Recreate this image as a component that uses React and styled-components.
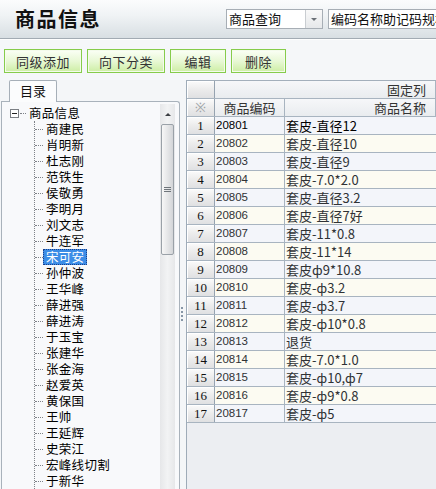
import React from 'react'
import styled, { createGlobalStyle } from 'styled-components'

const GlobalStyle = createGlobalStyle`
  html, body {
    margin: 0;
    padding: 0;
    background: #f4f6f8;
    font-family: "Noto Sans CJK SC", "Noto Sans", sans-serif;
    overflow: hidden;
  }
  * { box-sizing: border-box; }
`

const Page = styled.div`
  width: 436px;
  height: 489px;
  display: flex;
  flex-direction: column;
  overflow: hidden;
  background: #f4f6f8;
`

const Header = styled.header`
  height: 39px;
  flex: 0 0 39px;
  display: flex;
  align-items: center;
  padding-left: 15px;
  background: linear-gradient(#fbfcfd, #f0f3f5 40%, #d8dfe3);
  border-bottom: 1px solid #a2abb3;
  overflow: hidden;
`

const Title = styled.h1`
  flex: 0 0 211px;
  margin: 0 0 1px;
  font-size: 20px;
  font-weight: 700;
  color: #111;
  letter-spacing: 1.5px;
  line-height: 1;
`

const Select = styled.div`
  flex: 0 0 97px;
  height: 20px;
  display: flex;
  border: 1px solid #a7aeb5;
  background: #fff;
  font-size: 13px;
  line-height: 18px;
  color: #111;
`

const SelectText = styled.span`
  flex: 1;
  padding-left: 2px;
  white-space: nowrap;
`

const SelectArrow = styled.span`
  flex: 0 0 17px;
  border-left: 1px solid #c9cdd1;
  background: linear-gradient(#f9f9f9, #e6e8ea);
  display: flex;
  align-items: center;
  justify-content: center;
  &::after {
    content: '';
    border-left: 3px solid transparent;
    border-right: 3px solid transparent;
    border-top: 3px solid #6b7076;
  }
`

const Input = styled.div`
  flex: 0 0 140px;
  height: 20px;
  margin-left: 5px;
  border: 1px solid #a7aeb5;
  background: #fff;
  font-size: 13px;
  line-height: 18px;
  padding-left: 2px;
  color: #111;
  white-space: nowrap;
  overflow: hidden;
`

const Toolbar = styled.div`
  flex: 0 0 40px;
  display: flex;
  gap: 5px;
  padding: 9px 4px 7px;
  background: #f5f7f9;
  border-top: 1px solid #fdfefe;
`

const Button = styled.button`
  width: ${p => p.$w}px;
  height: 24px;
  padding: 0;
  border: 1px solid #86cc4b;
  box-shadow: inset 0 0 0 1px #f4fbec;
  background: linear-gradient(#fbfff6, #e8f8d5 50%, #cdeea4);
  font-family: "Noto Sans CJK SC", sans-serif;
  font-size: 13px;
  color: #333;
  letter-spacing: 0.5px;
`

const Main = styled.div`
  flex: 1;
  min-height: 0;
  display: flex;
`

const LeftPane = styled.div`
  flex: 0 0 180px;
  display: flex;
  flex-direction: column;
  padding-left: 1px;
`

const Tab = styled.div`
  width: 48px;
  height: 22px;
  margin-left: 8px;
  border: 1px solid #a6afb8;
  border-bottom: none;
  border-radius: 2px 2px 0 0;
  background: #fbfcfd;
  font-size: 13px;
  line-height: 20px;
  text-align: center;
  color: #111;
  position: relative;
  z-index: 1;
  margin-bottom: -1px;
`

const TreeBox = styled.div`
  flex: 1;
  width: 179px;
  display: flex;
  border: 1px solid #a9b2bb;
  border-bottom: none;
  border-radius: 0 3px 0 0;
  background: #f8f9fb;
  overflow: hidden;
`

const TreeList = styled.div`
  flex: 1;
  padding-top: 3px;
  font-size: 12.5px;
  color: #000;
`

const TreeRow = styled.div`
  height: 16px;
  display: flex;
  align-items: center;
  white-space: nowrap;
`

const Expander = styled.span`
  width: 9px;
  height: 9px;
  margin-left: 8px;
  border: 1px solid #7b7f84;
  background: #fff;
  display: flex;
  align-items: center;
  justify-content: center;
  &::after {
    content: '';
    width: 5px;
    height: 1px;
    background: #222;
  }
`

const Connector = styled.span`
  width: ${p => p.$w}px;
  margin-left: ${p => p.$ml || 0}px;
  border-top: 1px dotted #7e8288;
`

const Children = styled.div`
  margin-left: 32px;
  border-left: 1px dotted #7e8288;
`

const Label = styled.span`
  display: inline-block;
  height: 16px;
  line-height: 14px;
  padding: 0 2px;
  letter-spacing: 0.3px;
  border: 1px dotted ${p => (p.$selected ? '#1b3f8a' : 'transparent')};
  background: ${p => (p.$selected ? '#3c8de6' : 'transparent')};
  color: ${p => (p.$selected ? '#fff' : '#000')};
`

const ScrollBar = styled.div`
  flex: 0 0 15px;
  margin: 2px 4px 0 0;
  display: flex;
  flex-direction: column;
  background: linear-gradient(90deg, #e6e7e9, #f2f3f4 50%, #e6e7e9);
`

const ScrollArrow = styled.div`
  height: 20px;
  display: flex;
  align-items: center;
  justify-content: center;
  &::after {
    content: '';
    border-left: 3px solid transparent;
    border-right: 3px solid transparent;
    border-bottom: 3px solid #3c3f43;
  }
`

const Thumb = styled.div`
  height: 131px;
  margin: 0 1px;
  border: 1px solid #9aa1a8;
  border-radius: 2px;
  background: linear-gradient(90deg, #f7f7f7, #e2e3e5 60%, #d3d5d8);
  display: flex;
  align-items: center;
  justify-content: center;
  &::after {
    content: '';
    width: 7px;
    height: 5px;
    background: repeating-linear-gradient(#6f757b 0 1px, transparent 1px 2px);
  }
`

const Splitter = styled.div`
  flex: 0 0 6px;
  display: flex;
  align-items: center;
  justify-content: center;
  &::after {
    content: '';
    width: 2px;
    height: 15px;
    margin-top: 60px;
    margin-left: -2px;
    background: repeating-linear-gradient(#8796a6 0 2px, transparent 2px 4px);
  }
`

const Grid = styled.div`
  flex: 1;
  min-width: 0;
  display: flex;
  flex-direction: column;
  border-left: 1px solid #9eabb8;
  border-top: 1px solid #a3afbb;
  background: #eceef2;
  overflow: hidden;
`

const Row = styled.div`
  height: 18px;
  flex: 0 0 18px;
  display: flex;
  border-bottom: 1px solid #a8b4c0;
  background: ${p => p.$bg};
`

const NumCell = styled.div`
  flex: 0 0 28px;
  border-right: 1px solid #96a3b0;
  background: linear-gradient(#fbfbfb, #ececec 50%, #dfe0e2);
  box-shadow: inset 1px 1px 0 #fff;
  font-family: "Liberation Serif", serif;
  font-size: 13px;
  line-height: 17px;
  text-align: center;
  color: ${p => p.$muted ? '#a0a4a8' : '#111'};
`

const HeadCell = styled.div`
  flex: ${p => p.$flex || '0 0 70px'};
  border-right: 1px solid #a8b4c0;
  background: linear-gradient(#f6f7f9, #e9ecef);
  font-size: 13px;
  line-height: 17px;
  color: #333;
  text-align: ${p => p.$align || 'center'};
  padding-right: ${p => p.$pr || 0}px;
  white-space: nowrap;
`

const CodeCell = styled.div`
  flex: 0 0 70px;
  border-right: 1px solid #a8b4c0;
  padding-left: 1px;
  font-family: "Liberation Sans", sans-serif;
  font-size: 11.5px;
  line-height: 17px;
  color: ${p => (p.$active ? '#000' : '#2f3235')};
`

const NameCell = styled.div`
  flex: 1;
  padding-left: 1px;
  font-size: 13px;
  line-height: 17px;
  color: ${p => (p.$active ? '#000' : '#2f3235')};
  white-space: nowrap;
`

const names = [
  '商建民', '肖明新', '杜志刚', '范铁生', '侯敬勇', '李明月', '刘文志', '牛连军',
  '宋可安', '孙仲波', '王华峰', '薛进强', '薛进涛', '于玉宝', '张建华', '张金海',
  '赵爱英', '黄保国', '王帅', '王延辉', '史荣江', '宏峰线切割', '于新华',
]

const goods = [
  ['20801', '套皮-直径12'],
  ['20802', '套皮-直径10'],
  ['20803', '套皮-直径9'],
  ['20804', '套皮-7.0*2.0'],
  ['20805', '套皮-直径3.2'],
  ['20806', '套皮-直径7好'],
  ['20807', '套皮-11*0.8'],
  ['20808', '套皮-11*14'],
  ['20809', '套皮ф9*10.8'],
  ['20810', '套皮-ф3.2'],
  ['20811', '套皮-ф3.7'],
  ['20812', '套皮-ф10*0.8'],
  ['20813', '退货'],
  ['20814', '套皮-7.0*1.0'],
  ['20815', '套皮-ф10,ф7'],
  ['20816', '套皮-ф9*0.8'],
  ['20817', '套皮-ф5'],
]

const App = () => {
  return (
    <Page>
      <GlobalStyle />
      <Header>
        <Title>商品信息</Title>
        <Select>
          <SelectText>商品查询</SelectText>
          <SelectArrow />
        </Select>
        <Input>编码名称助记码规格</Input>
      </Header>

      <Toolbar>
        <Button $w={78}>同级添加</Button>
        <Button $w={78}>向下分类</Button>
        <Button $w={56}>编辑</Button>
        <Button $w={55}>删除</Button>
      </Toolbar>

      <Main>
        <LeftPane>
          <Tab>目录</Tab>
          <TreeBox>
            <TreeList>
              <TreeRow>
                <Expander />
                <Connector $w={6} $ml={1} />
                <Label>商品信息</Label>
              </TreeRow>
              <Children>
                {names.map(n => (
                  <TreeRow key={n}>
                    <Connector $w={8} />
                    <Label $selected={n === '宋可安'}>{n}</Label>
                  </TreeRow>
                ))}
              </Children>
            </TreeList>
            <ScrollBar>
              <ScrollArrow />
              <Thumb />
            </ScrollBar>
          </TreeBox>
        </LeftPane>

        <Splitter />

        <Grid>
          <Row>
            <NumCell />
            <HeadCell $flex="1" $align="right" $pr={9}>固定列</HeadCell>
          </Row>
          <Row>
            <NumCell $muted>※</NumCell>
            <HeadCell>商品编码</HeadCell>
            <HeadCell $flex="1" $align="right" $pr={9}>商品名称</HeadCell>
          </Row>
          {goods.map(([code, name], i) => (
            <Row key={code} $bg={i % 2 === 0 ? '#f3f5fa' : '#fcfbf2'}>
              <NumCell>{i + 1}</NumCell>
              <CodeCell $active={i === 0}>{code}</CodeCell>
              <NameCell $active={i === 0}>{name}</NameCell>
            </Row>
          ))}
        </Grid>
      </Main>
    </Page>
  )
}

export default App
